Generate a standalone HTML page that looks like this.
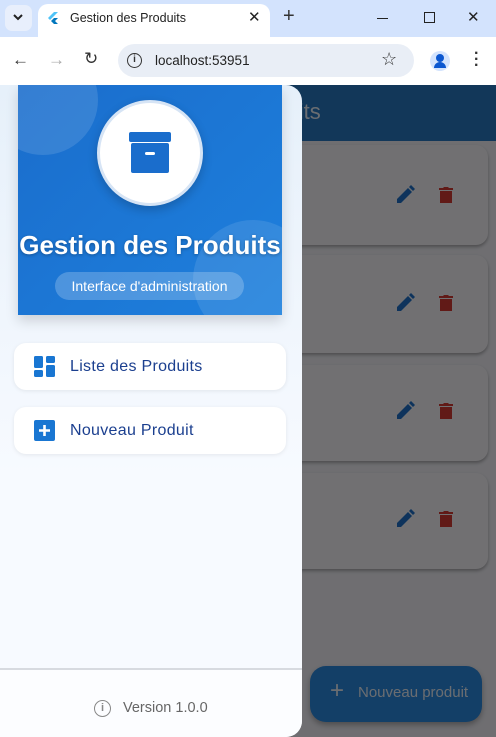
<!DOCTYPE html>
<html><head><meta charset="utf-8"><style>
*{margin:0;padding:0;box-sizing:border-box}
body{width:496px;height:737px;overflow:hidden;font-family:"Liberation Sans",sans-serif;background:#f1f0f6;position:relative}
.tabs{position:absolute;left:0;top:0;width:496px;height:37px;background:#d3e3fd}
.tab{position:absolute;left:38px;top:4px;width:232px;height:33px;background:#fff;border-radius:10px 10px 0 0}
.toolbar{position:absolute;left:0;top:37px;width:496px;height:48px;background:#fff}
.url{position:absolute;left:118px;top:7px;width:296px;height:33px;background:#e9eef6;border-radius:17px}
.appbar{position:absolute;left:0;top:85px;width:496px;height:56px;background:#2878c2}
.card{position:absolute;left:290px;width:198px;background:#f6f5f9;border-radius:12px;box-shadow:0 2px 3px rgba(0,0,0,.3)}
.scrim{position:absolute;left:0;top:85px;width:496px;height:652px;background:rgba(0,0,0,.54)}
.drawer{position:absolute;left:0;top:85px;width:302px;height:652px;background:linear-gradient(#e6f0fa,#f7faff 60%);border-radius:0 16px 16px 0;overflow:hidden}
.header{position:absolute;left:18px;top:0;width:264px;height:230px;background:linear-gradient(135deg,#1a6dcc,#1e80dd);overflow:hidden;box-shadow:0 6px 12px rgba(0,0,0,.15)}
.item{position:absolute;left:14px;width:272px;height:47px;background:#fff;border-radius:12px;box-shadow:0 1px 4px rgba(0,0,0,.08);font-size:16px;color:#1b3f8f;letter-spacing:.3px}
.fab{position:absolute;left:310px;top:666px;width:172px;height:56px;background:#2a8ae0;border-radius:16px;box-shadow:0 3px 6px rgba(0,0,0,.3);color:#e8eef6;font-size:15px}
</style></head><body>
<div class="tabs">
 <div style="position:absolute;left:5px;top:5px;width:27px;height:26px;background:#e8effc;border-radius:7px"></div>
 <svg style="position:absolute;left:12px;top:12px" width="12" height="10"><path d="M2 3l4 4 4-4" stroke="#222" stroke-width="2" fill="none"/></svg>
 <div class="tab"></div>
 <svg style="position:absolute;left:48px;top:12px" width="10" height="12"><path d="M6 0L0 6l2 2 8-8z" fill="#4fc3f7"/><path d="M6 6L3 9l3 3h4L7 9l3-3z" fill="#0277bd"/></svg>
 <div style="position:absolute;left:70px;top:11px;font-size:12.5px;color:#222">Gestion des Produits</div>
 <div style="position:absolute;left:248px;top:8px;font-size:15px;color:#222">✕</div>
 <div style="position:absolute;left:283px;top:5px;font-size:20px;color:#333">+</div>
 <div style="position:absolute;left:377px;top:18px;width:11px;height:1px;background:#222"></div>
 <div style="position:absolute;left:424px;top:12px;width:11px;height:11px;border:1.3px solid #222"></div>
 <div style="position:absolute;left:467px;top:8px;font-size:15px;color:#222">✕</div>
</div>
<div class="toolbar">
 <div style="position:absolute;left:12px;top:13px;font-size:17px;color:#333">←</div>
 <div style="position:absolute;left:48px;top:13px;font-size:17px;color:#aaa">→</div>
 <div style="position:absolute;left:84px;top:12px;font-size:17px;color:#333">↻</div>
 <div class="url">
  <div style="position:absolute;left:9px;top:9px;width:15px;height:15px;border:1.6px solid #333;border-radius:50%;font-size:10px;text-align:center;line-height:12px;font-weight:bold;color:#333">i</div>
  <div style="position:absolute;left:37px;top:9px;font-size:13.5px;color:#222">localhost:53951</div>
  <div style="position:absolute;left:263px;top:5px;font-size:18px;color:#333">☆</div>
 </div>
 <div style="position:absolute;left:430px;top:14px;width:20px;height:20px;border-radius:50%;background:#d3e3fd"></div>
 <div style="position:absolute;left:436px;top:17px;width:8px;height:8px;border-radius:50%;background:#0b57d0"></div>
 <div style="position:absolute;left:434px;top:25px;width:12px;height:6px;border-radius:6px 6px 0 0;background:#0b57d0"></div>
 <div style="position:absolute;left:474px;top:14px;font-size:16px;color:#333;line-height:6px;font-weight:bold">·<br>·<br>·</div>
</div>
<div class="appbar"><div style="position:absolute;left:240px;top:14px;font-size:22px;color:#e8eef6">Produits</div></div>
<div class="card" style="top:145px;height:100px"></div>
<div class="card" style="top:255px;height:98px"></div>
<div class="card" style="top:365px;height:96px"></div>
<div class="card" style="top:473px;height:96px"></div>
<svg width="0" height="0" style="position:absolute"><defs>
<g id="ic"><path d="M0 18v-4L11 3l4 4L4 18z M12 2l2-2 4 4-2 2z" fill="#1f70c8"/><path d="M42 3h4l1-1h4l1 1h4v2H42z M43 6h12v12H43z" fill="#d43a33"/></g></defs></svg>
<svg style="position:absolute;left:397px;top:185px" width="60" height="20"><use href="#ic"/></svg>
<svg style="position:absolute;left:397px;top:293px" width="60" height="20"><use href="#ic"/></svg>
<svg style="position:absolute;left:397px;top:401px" width="60" height="20"><use href="#ic"/></svg>
<svg style="position:absolute;left:397px;top:509px" width="60" height="20"><use href="#ic"/></svg>
<div class="fab"><div style="position:absolute;left:20px;top:11px;font-size:24px">+</div><div style="position:absolute;left:48px;top:18px">Nouveau produit</div></div>
<div class="scrim"></div>
<div class="drawer">
 <div class="header">
  <div style="position:absolute;left:-30px;top:-40px;width:110px;height:110px;border-radius:50%;background:rgba(255,255,255,.12)"></div>
  <div style="position:absolute;left:175px;top:135px;width:120px;height:120px;border-radius:50%;background:rgba(255,255,255,.1)"></div>
  <div style="position:absolute;left:79px;top:15px;width:106px;height:106px;border-radius:50%;background:#fff;border:3px solid #d6e4f5;box-shadow:0 4px 10px rgba(0,0,0,.2)"></div>
  <svg style="position:absolute;left:111px;top:47px" width="42" height="42"><rect x="0" y="0" width="42" height="10" rx="2" fill="#1a6dcc"/><rect x="2" y="11" width="38" height="30" rx="2" fill="#1a6dcc"/><rect x="16" y="20" width="10" height="3" rx="1.5" fill="#fff"/></svg>
  <div style="position:absolute;left:-10px;width:284px;top:145px;text-align:center;color:#fff;font-size:26px;font-weight:bold;text-shadow:0 1px 3px rgba(0,0,0,.3)">Gestion des Produits</div>
  <div style="position:absolute;left:37px;top:187px;width:189px;height:28px;border-radius:14px;background:rgba(255,255,255,.22);color:#fff;font-size:14px;text-align:center;line-height:28px">Interface d'administration</div>
 </div>
 <div class="item" style="top:258px">
  <svg style="position:absolute;left:20px;top:13px" width="21" height="21"><rect x="0" y="0" width="9" height="12" rx="1.5" fill="#1976d2"/><rect x="0" y="14" width="9" height="7" rx="1.5" fill="#1976d2"/><rect x="12" y="0" width="9" height="7" rx="1.5" fill="#1976d2"/><rect x="12" y="9" width="9" height="12" rx="1.5" fill="#1976d2"/></svg>
  <div style="position:absolute;left:56px;top:15px">Liste des Produits</div>
 </div>
 <div class="item" style="top:322px">
  <svg style="position:absolute;left:20px;top:13px" width="21" height="21"><rect width="21" height="21" rx="2" fill="#1976d2"/><path d="M10.5 5v11M5 10.5h11" stroke="#fff" stroke-width="2.6"/></svg>
  <div style="position:absolute;left:56px;top:15px">Nouveau Produit</div>
 </div>
 <div style="position:absolute;left:0;top:583px;width:302px;height:2px;background:#d7dae0"></div>
 <div style="position:absolute;left:0;top:585px;width:302px;height:70px;background:#fcfdff"></div>
 <div style="position:absolute;left:94px;top:615px;width:17px;height:17px;border:1.5px solid #888;border-radius:50%;font-size:11px;text-align:center;line-height:14px;color:#888;font-weight:bold">i</div>
 <div style="position:absolute;left:123px;top:615px;font-size:14.5px;color:#666">Version 1.0.0</div>
</div>
</body></html>
